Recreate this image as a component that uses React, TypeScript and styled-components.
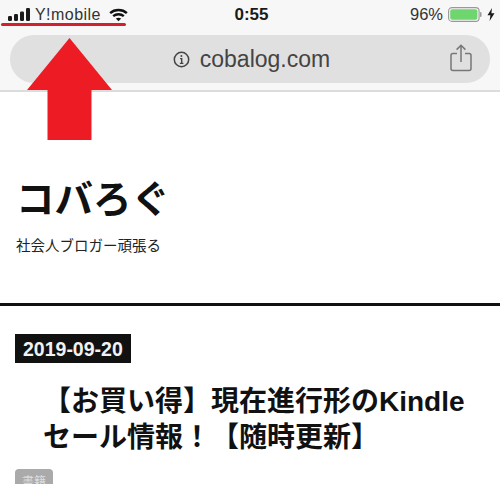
import styled, { createGlobalStyle } from "styled-components";

const GlobalStyle = createGlobalStyle`
  html, body {
    margin: 0;
    padding: 0;
    background: #fff;
  }
  body {
    font-family: "Liberation Sans", "Noto Sans CJK JP", sans-serif;
    color: #111;
  }
`;

const Page = styled.div`
  position: relative;
  width: 500px;
  height: 484px;
  overflow: hidden;
`;

const BrowserChrome = styled.header`
  background: #f7f7f7;
  border-bottom: 2px solid #dcdcdc;
  height: 92px;
  padding: 0 10px;
  box-sizing: border-box;
`;

const StatusBar = styled.div`
  display: grid;
  grid-template-columns: 1fr auto 1fr;
  align-items: center;
  height: 29px;
  margin: 0 -10px 6px;
  padding: 0 5px 0 8px;
  font-size: 16.5px;
  color: #333;
`;

const Carrier = styled.div`
  display: flex;
  align-items: center;
  gap: 4px;
  font-size: 16px;
  letter-spacing: 0.45px;
`;

const Clock = styled.div`
  font-weight: 700;
  font-size: 17px;
  color: #1a1a1a;
`;

const BatteryGroup = styled.div`
  display: flex;
  align-items: center;
  justify-content: flex-end;
  gap: 5px;
`;

const AddressBar = styled.div`
  position: relative;
  display: flex;
  align-items: center;
  justify-content: center;
  gap: 10px;
  height: 48px;
  padding-left: 3px;
  box-sizing: border-box;
  border-radius: 24px;
  background: #e0e0e0;
  font-size: 23px;
  color: #444;
`;

const ShareButton = styled.div`
  position: absolute;
  right: 18px;
  top: 9px;
  display: flex;
`;

const RedUnderline = styled.div`
  position: absolute;
  left: 1px;
  top: 23px;
  width: 125px;
  height: 3px;
  border-radius: 2px;
  background: #d2202c;
`;

const ArrowOverlay = styled.svg`
  position: absolute;
  left: 27px;
  top: 38px;
`;

const SiteHeader = styled.section`
  height: 214px;
  padding: 85px 16px 0;
  box-sizing: border-box;
  border-bottom: 3px solid #111;
`;

const SiteTitle = styled.h1`
  margin: 0;
  font-size: 38.5px;
  line-height: 46px;
  font-weight: 700;
  color: #111;
`;

const Tagline = styled.p`
  margin: 13px 0 0;
  font-size: 14.5px;
  line-height: 20px;
  color: #222;
`;

const Article = styled.article`
  padding: 28px 15px 0;
`;

const DateChip = styled.div`
  display: inline-block;
  padding: 0 8px;
  height: 29px;
  line-height: 30px;
  background: #111;
  color: #f2f2f2;
  font-size: 19.5px;
  font-weight: 700;
`;

const ArticleTitle = styled.h2`
  margin: 21px 0 0 28px;
  font-size: 28px;
  line-height: 36px;
  font-weight: 700;
  color: #111;
`;

const Category = styled.span`
  display: inline-block;
  margin-top: 13px;
  padding: 0 7px;
  height: 28px;
  line-height: 26px;
  border-radius: 4px;
  background: #aaa;
  color: #ddd;
  font-size: 12px;
`;

function SignalIcon() {
  return (
    <svg width="23" height="13" viewBox="0 0 23 13" fill="#1a1a1a">
      <rect x="0" y="8" width="4" height="5" rx="1.2" />
      <rect x="6" y="6" width="4" height="7" rx="1.2" />
      <rect x="12" y="3.5" width="4" height="9.5" rx="1.2" />
      <rect x="18" y="0" width="4" height="13" rx="1.2" />
    </svg>
  );
}

function WifiIcon() {
  return (
    <svg width="19" height="14" viewBox="0 0 20 14" fill="none" stroke="#111" strokeWidth="2.6" style={{ marginLeft: 4 }}>
      <path d="M1.2 5 C6 0.6 14 0.6 18.8 5" />
      <path d="M4.4 8.2 C7.6 5.5 12.4 5.5 15.6 8.2" />
      <path d="M10 13.6 L7.2 10.8 C9 9.6 11 9.6 12.8 10.8 Z" fill="#111" stroke="none" />
    </svg>
  );
}

function BatteryIcon() {
  return (
    <svg width="34" height="15" viewBox="0 0 34 15">
      <rect x="0.6" y="0.6" width="30.5" height="13.8" rx="3.4" fill="none" stroke="#999" strokeWidth="1.1" />
      <rect x="2.2" y="2.2" width="27.2" height="10.6" rx="2" fill="#6fd66f" />
      <rect x="32" y="5" width="1.5" height="5" rx="0.7" fill="#999" />
    </svg>
  );
}

function BoltIcon() {
  return (
    <svg width="8" height="13" viewBox="0 0 8 13" fill="#1a1a1a">
      <path d="M5 0 L0.5 7.2 H3.4 L2.6 13 L7.5 5.2 H4.4 Z" />
    </svg>
  );
}

function InfoIcon() {
  return (
    <svg width="17" height="17" viewBox="0 0 17 17" fill="none" stroke="#444" strokeWidth="1.5">
      <circle cx="8.5" cy="8.5" r="7.2" />
      <path d="M7 7.6 H8.7 V12.4 M6.9 12.4 H10.4" strokeWidth="1.4" />
      <circle cx="8.4" cy="4.9" r="1" fill="#444" stroke="none" />
    </svg>
  );
}

function ShareIcon() {
  return (
    <svg width="22" height="28" viewBox="0 0 22 28" fill="none" stroke="#777" strokeWidth="1.5">
      <path d="M7 9.5 H3 Q1 9.5 1 11.5 V24.5 Q1 26.5 3 26.5 H19 Q21 26.5 21 24.5 V11.5 Q21 9.5 19 9.5 H15" />
      <path d="M11 18 V1.5 M6.6 5.6 L11 1.2 L15.4 5.6" />
    </svg>
  );
}

export default function App() {
  return (
    <Page>
      <GlobalStyle />
      <BrowserChrome>
        <StatusBar>
          <Carrier>
            <SignalIcon />
            Y!mobile
            <WifiIcon />
          </Carrier>
          <Clock>0:55</Clock>
          <BatteryGroup>
            96%
            <BatteryIcon />
            <BoltIcon />
          </BatteryGroup>
        </StatusBar>
        <AddressBar>
          <InfoIcon />
          cobalog.com
          <ShareButton>
            <ShareIcon />
          </ShareButton>
        </AddressBar>
      </BrowserChrome>
      <SiteHeader>
        <SiteTitle>コバろぐ</SiteTitle>
        <Tagline>社会人ブロガー頑張る</Tagline>
      </SiteHeader>
      <Article>
        <DateChip>2019-09-20</DateChip>
        <ArticleTitle>
          【お買い得】現在進行形のKindle
          <br />
          セール情報！【随時更新】
        </ArticleTitle>
        <Category>書籍</Category>
      </Article>
      <RedUnderline />
      <ArrowOverlay width="86" height="103" viewBox="0 0 86 103">
        <path d="M42.5 0 L85 52 H64.5 V102 H20.5 V52 H0 Z" fill="#ed1c24" />
      </ArrowOverlay>
    </Page>
  );
}
